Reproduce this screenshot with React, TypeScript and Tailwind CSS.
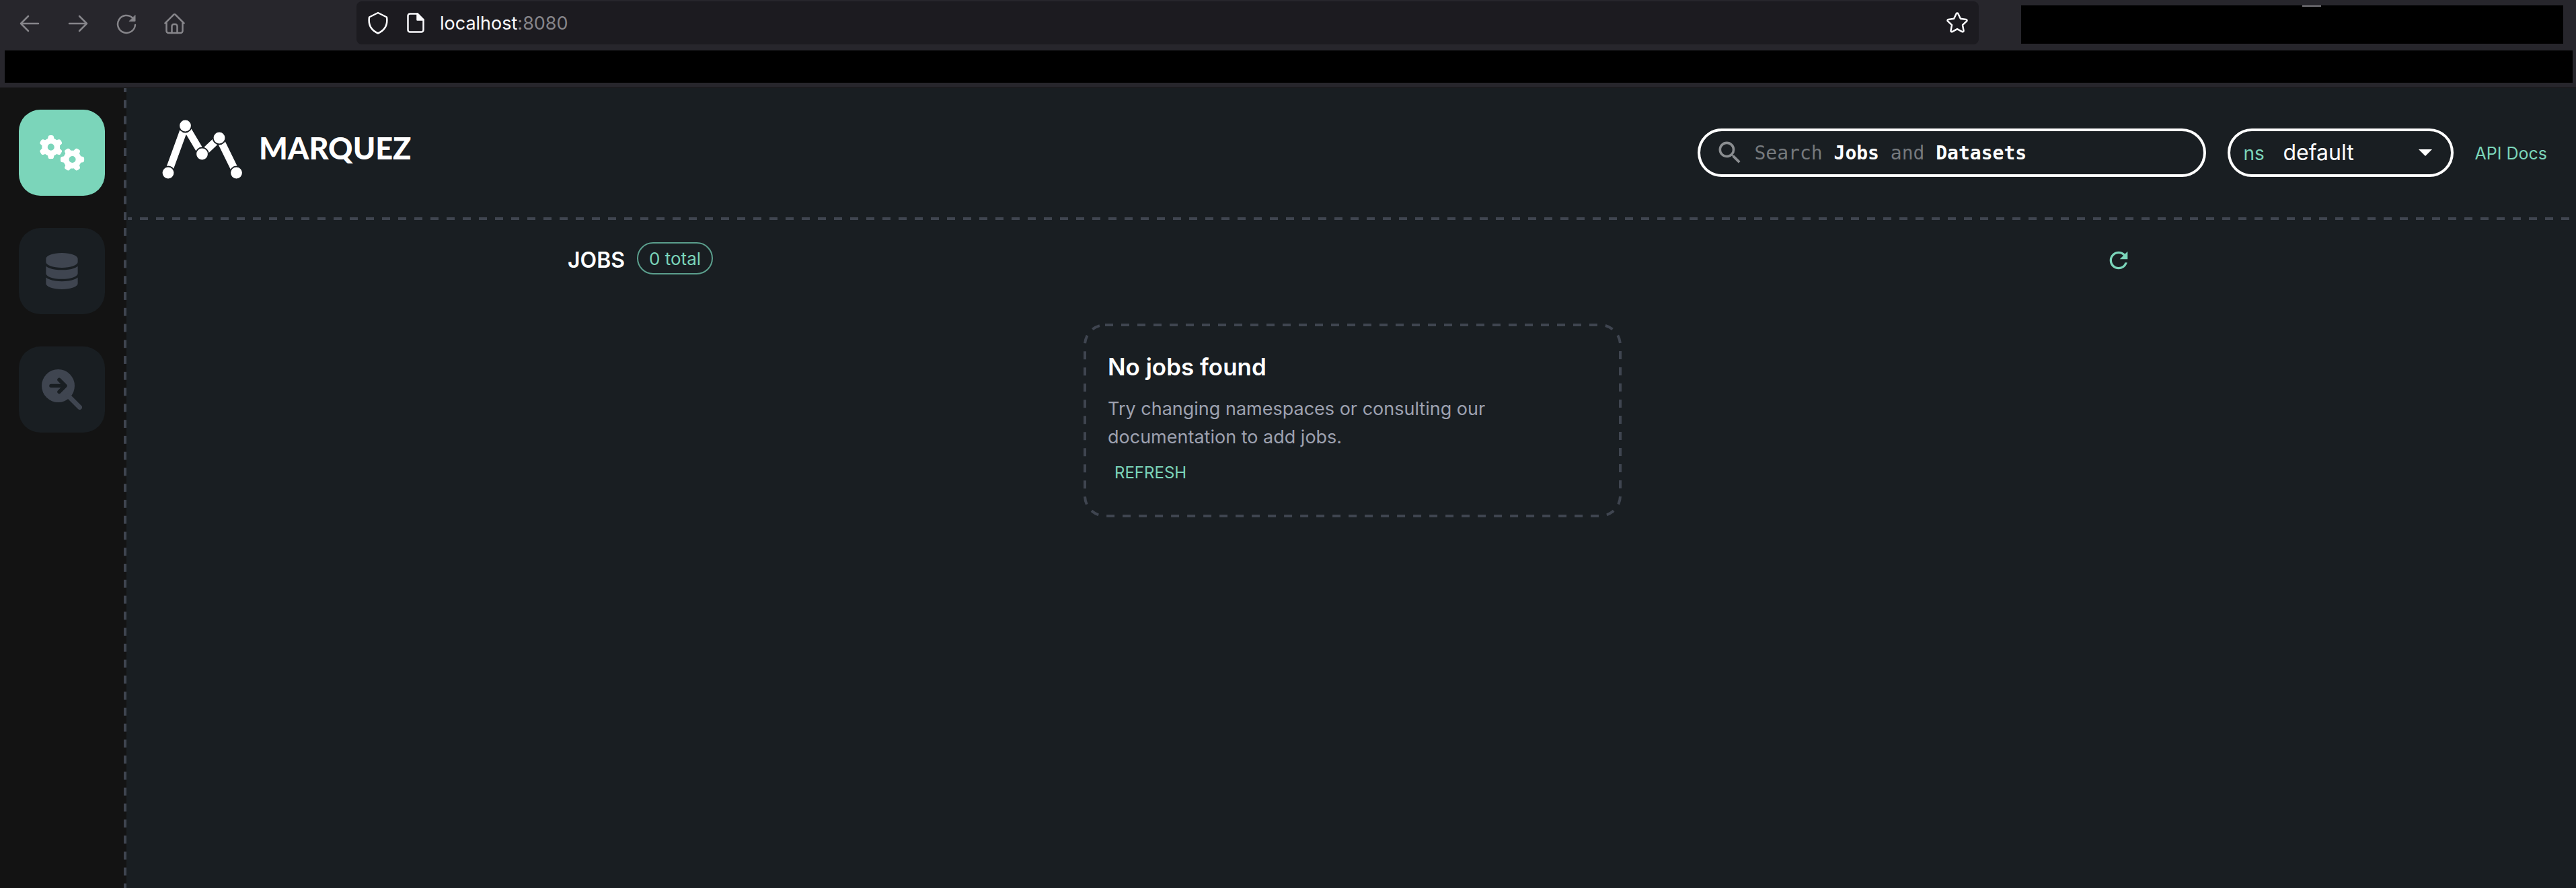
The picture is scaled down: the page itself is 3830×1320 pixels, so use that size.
import React from "react";
import { FaDatabase, FaGears } from "react-icons/fa6";
import { MdRefresh, MdSearch } from "react-icons/md";

function BrowserBar() {
  return (
    <div className="border-b border-[#151515] bg-[#27262c]">
      <div className="flex h-[75px] items-start">
        <nav aria-label="Browser" className="flex w-[530px] shrink-0 items-center gap-10 pt-[19px] pl-7 text-[#86858a]">
          <button type="button" aria-label="Back">
            <svg width="32" height="32" viewBox="0 0 32 32" fill="none" stroke="currentColor" strokeWidth="2.500" strokeLinecap="round" strokeLinejoin="round">
              <path d="M29 16H3M14 5L3 16l11 11" />
            </svg>
          </button>
          <button type="button" aria-label="Forward">
            <svg width="32" height="32" viewBox="0 0 32 32" fill="none" stroke="currentColor" strokeWidth="2.500" strokeLinecap="round" strokeLinejoin="round">
              <path d="M3 16h26M18 5l11 11-11 11" />
            </svg>
          </button>
          <button type="button" aria-label="Reload">
            <svg width="32" height="32" viewBox="0 0 32 32" fill="none" stroke="currentColor" strokeWidth="2.500" strokeLinecap="round">
              <path d="M29 18A13 13 0 1 1 25 7.500" />
              <path d="M29 4v8.500h-8.500z" fill="currentColor" strokeWidth="1" strokeLinejoin="round" />
            </svg>
          </button>
          <button type="button" aria-label="Home">
            <svg width="32" height="32" viewBox="0 0 32 32" fill="none" stroke="currentColor" strokeWidth="2.500" strokeLinecap="round" strokeLinejoin="round">
              <path d="M1.500 15.500L14 3a2 2 0 0 1 3 0l12.500 12.500M3.500 13.500V27a3 3 0 0 0 3 3h18a3 3 0 0 0 3-3V13.500" />
              <path d="M11.500 30V20a3 3 0 0 1 3-3h2a3 3 0 0 1 3 3v10" />
            </svg>
          </button>
        </nav>
        <div className="mt-0.5 flex h-16 min-w-0 flex-1 items-center rounded-lg bg-[#1c1b20] px-4 text-[#fbfbfe]">
          <svg className="shrink-0" width="32" height="34" viewBox="0 0 32 34" fill="none" stroke="currentColor" strokeWidth="2.500" strokeLinejoin="round">
            <path d="M16 2L29 8.500c1.500 10-2 19-13 24C5 27.500 1.500 18.500 3 8.500z" />
          </svg>
          <svg className="mr-[22px] ml-[26px] shrink-0" width="28" height="32" viewBox="0 0 28 32" fill="none" stroke="currentColor" strokeWidth="2.500" strokeLinejoin="round">
            <path d="M16.500 2.500H5.500a3 3 0 0 0-3 3v21a3 3 0 0 0 3 3h17a3 3 0 0 0 3-3v-15z" />
            <path d="M16.500 2.500v9h9z" fill="currentColor" />
          </svg>
          <div className="min-w-0 flex-1 pt-0.5 font-['Inter',sans-serif] text-[27px] leading-9">
            localhost<span className="text-[#86858a]">:8080</span>
          </div>
          <button type="button" aria-label="Bookmark this page">
            <svg width="32" height="34" viewBox="1 0 32 34" fill="none" stroke="currentColor" strokeWidth="2.500" strokeLinejoin="round">
              <path d="M15.700 3.200a1.500 1.500 0 0 1 2.600 0l3.600 7.600 8.300 1.100a1.500 1.500 0 0 1 .9 2.500l-6.100 5.800 1.500 8.300a1.500 1.500 0 0 1-2.200 1.600L17 26.100l-7.300 4a1.500 1.500 0 0 1-2.200-1.600L9 20.200l-6.100-5.800a1.500 1.500 0 0 1 .9-2.500l8.300-1.100z" />
            </svg>
          </button>
        </div>
        <div className="mt-2 mr-[19px] ml-[63px] flex h-[57px] w-[806px] justify-center bg-black">
          <div className="ml-[58px] h-0.5 w-7 bg-[#77767b]" />
        </div>
      </div>
      <div className="mr-[5px] mb-[7px] ml-[7px] h-12 bg-black" />
    </div>
  );
}

function Sidebar() {
  const item = "flex size-32 items-center justify-center rounded-[32px]";
  return (
    <nav
      aria-label="Main"
      className="flex w-[188px] shrink-0 flex-col gap-12 bg-[#131313] bg-[linear-gradient(#3f4550_25%,transparent_25%,transparent_75%,#3f4550_75%)] bg-[length:4px_24px] bg-right-top [background-repeat:no-repeat_round] pt-8 pl-7"
    >
      <a href="#jobs" aria-label="Jobs" className={item + " bg-[#7bd5ba] text-white"}>
        <FaGears className="h-[54px] w-[67px]" />
      </a>
      <a href="#datasets" aria-label="Datasets" className={item + " bg-[#191e22] text-[#3f4550]"}>
        <FaDatabase className="h-[54px] w-12" />
      </a>
      <a href="#events" aria-label="Events" className={item + " bg-[#191e22] text-[#3f4550]"}>
        <svg width="60" height="60" viewBox="0 0 60 60" fill="none" strokeLinecap="round" strokeLinejoin="round">
          <circle cx="24.500" cy="24.500" r="24.500" fill="currentColor" />
          <path d="M39 39L56.500 56.500" stroke="currentColor" strokeWidth="7" />
          <path d="M14 24.500H34M26 15.500l9 9-9 9" stroke="#191e22" strokeWidth="5.500" />
        </svg>
      </a>
    </nav>
  );
}

function Logo() {
  return (
    <a href="#home" className="flex items-center pb-2.5 text-white">
      <svg className="overflow-visible" width="120" height="88" viewBox="0 0 120 88">
        <path d="M9 79L34.500 9L59.500 51L85 27L110.500 79" fill="none" stroke="currentColor" strokeWidth="11" strokeLinejoin="round" />
        <g fill="currentColor" stroke="#191e22" strokeWidth="2">
          <circle cx="34.500" cy="9" r="9.400" />
          <circle cx="59.500" cy="51" r="9.400" />
          <circle cx="85" cy="27" r="9.400" />
          <circle cx="9" cy="79" r="9.400" />
          <circle cx="110.500" cy="79" r="9.400" />
        </g>
      </svg>
      <span className="ml-6 pb-1 font-['Lato',sans-serif] text-[45px] leading-none font-black">MARQUEZ</span>
    </a>
  );
}

function Header() {
  return (
    <header>
      <div className="flex h-48 items-center justify-between pr-[43px] pl-[53px]">
        <Logo />
        <div className="flex items-center gap-8">
          <label className="flex h-[72px] w-[756px] items-center rounded-full border-4 border-white pr-8 pl-[22px]">
            <MdSearch className="size-[44px] shrink-0 text-[#8a8d90]" />
            <span className="ml-[15px] pt-0.5 font-['DejaVu_Sans_Mono',monospace] text-[28px] whitespace-nowrap text-[#75797d]">
              Search <b className="text-white">Jobs</b> and <b className="text-white">Datasets</b>
            </span>
            <input type="text" aria-label="Search Jobs and Datasets" className="min-w-0 flex-1 bg-transparent text-[28px] text-white outline-none" />
          </label>
          <div className="relative flex h-[72px] w-[336px] items-center rounded-full border-4 border-white pl-5">
            <label htmlFor="namespace" className="w-[59px] pt-0.5 text-[28px] text-[#7bd5ba]">
              ns
            </label>
            <select id="namespace" className="h-full min-w-0 flex-1 appearance-none bg-transparent text-[32px] text-white outline-none">
              <option>default</option>
            </select>
            <svg className="pointer-events-none absolute right-7 h-2.5 w-5" viewBox="0 0 20 10" fill="white">
              <path d="M0 0H20L10 10z" />
            </svg>
          </div>
          <a href="#docs" className="pt-1 text-[25px] whitespace-nowrap text-[#7bd5ba]">
            API Docs
          </a>
        </div>
      </div>
      <div className="ml-0.5 h-1 bg-[linear-gradient(90deg,#3f4550_25%,transparent_25%,transparent_75%,#3f4550_75%)] bg-[length:24px_4px] bg-repeat-x" />
    </header>
  );
}

function EmptyState() {
  return (
    <section className="relative mx-auto mt-[73px] w-[800px] max-w-full px-9 pt-[38px] pb-11">
      <svg className="pointer-events-none absolute inset-0 size-full overflow-visible" fill="none" aria-hidden="true">
        <rect x="2" y="2" rx="30" className="h-[calc(100%-4px)] w-[calc(100%-4px)]" stroke="#3f4550" strokeWidth="4" strokeDasharray="12 12" />
      </svg>
      <h2 className="text-[35px] leading-[52px] font-semibold text-white">No jobs found</h2>
      <p className="mt-4 max-w-[600px] text-[27px] leading-[42px] text-[#9da1b0]">
        Try changing namespaces or consulting our documentation to add jobs.
      </p>
      <button type="button" className="mt-2.5 block px-2.5 text-[24px] leading-[44px] text-[#7bd5ba]">
        REFRESH
      </button>
    </section>
  );
}

export default function App() {
  return (
    <div className="flex min-h-screen flex-col bg-[#191e22] font-['Inter',sans-serif]">
      <BrowserBar />
      <div className="flex flex-1">
        <Sidebar />
        <div className="min-w-0 flex-1">
          <Header />
          <div className="pt-[33px] pl-1">
            <main className="mx-auto max-w-[2334px]">
              <div className="flex h-12 items-center">
                <h1 className="pt-1.5 text-[32px] leading-10 font-semibold text-white">JOBS</h1>
                <span className="ml-[18px] flex h-12 items-center rounded-full border-2 border-[#5b9f8d] px-4 text-[26px] text-[#7bd5ba]">
                  0 total
                </span>
                <button type="button" aria-label="Refresh" className="mt-1.5 mr-2 ml-auto text-[#7bd5ba]">
                  <MdRefresh className="size-10" />
                </button>
              </div>
              <EmptyState />
            </main>
          </div>
        </div>
      </div>
    </div>
  );
}
